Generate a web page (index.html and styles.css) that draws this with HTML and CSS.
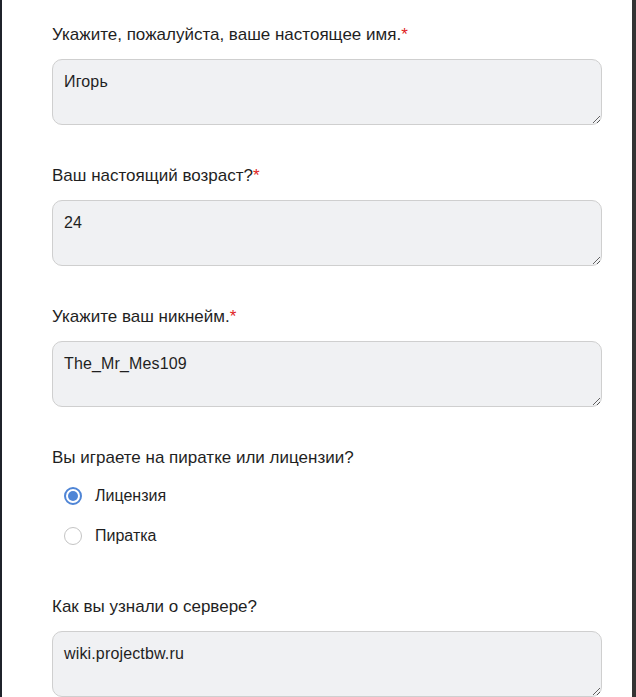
FILE: index.html
```html
<!DOCTYPE html>
<html lang="ru">
<head>
<meta charset="utf-8">
<title>Анкета</title>
<link rel="stylesheet" href="styles.css">
</head>
<body>
<div class="page">
  <div class="edge edge-left"></div>
  <form class="modal">
    <div class="field">
      <label class="label">Укажите, пожалуйста, ваше настоящее имя.<span class="req">*</span></label>
      <textarea class="input" readonly>Игорь</textarea>
    </div>
    <div class="field">
      <label class="label">Ваш настоящий возраст?<span class="req">*</span></label>
      <textarea class="input" readonly>24</textarea>
    </div>
    <div class="field">
      <label class="label">Укажите ваш никнейм.<span class="req">*</span></label>
      <textarea class="input" readonly>The_Mr_Mes109</textarea>
    </div>
    <div class="field field-radio">
      <div class="label">Вы играете на пиратке или лицензии?</div>
      <div class="radio-list">
        <div class="radio-row"><span class="radio checked"></span><span class="radio-text">Лицензия</span></div>
        <div class="radio-row"><span class="radio"></span><span class="radio-text">Пиратка</span></div>
      </div>
    </div>
    <div class="field">
      <label class="label">Как вы узнали о сервере?</label>
      <textarea class="input" readonly>wiki.projectbw.ru</textarea>
    </div>
  </form>
  <div class="edge edge-right"></div>
</div>
</body>
</html>
```
FILE: styles.css
```css
html, body {
  margin: 0;
  padding: 0;
  height: 697px;
  overflow: hidden;
  background: #303030;
}
.page {
  display: flex;
  height: 697px;
}
.edge {
  flex: 0 0 auto;
}
.edge-left {
  width: 2px;
  background: #1f232b;
}
.edge-right {
  width: 4px;
  background: #333333;
}
.modal {
  flex: 1;
  background: #ffffff;
  padding: 25px 28px 0 50px;
  font-family: "Liberation Sans", Arial, sans-serif;
  font-size: 16px;
  color: #1f1f1f;
  margin: 0;
}
.field {
  display: flex;
  flex-direction: column;
  margin-bottom: 41px;
}
.label {
  display: block;
  font-size: 17px;
  line-height: 20px;
  margin-bottom: 14px;
}
.req {
  color: #e02424;
}
.input {
  display: block;
  box-sizing: border-box;
  width: 550px;
  height: 66px;
  margin: 0;
  padding: 12px 11px;
  border: 1px solid #cfcfcf;
  border-radius: 10px;
  background: #f0f1f3;
  font-family: "Liberation Sans", Arial, sans-serif;
  font-size: 16px;
  letter-spacing: 0.15px;
  line-height: 20px;
  color: #1f1f1f;
  resize: vertical;
  outline: none;
}
.field-radio {
  margin-bottom: 41px;
}
.field-radio .label {
  margin-bottom: 8px;
}
.radio-list {
  display: flex;
  flex-direction: column;
}
.radio-row {
  display: flex;
  align-items: center;
  height: 40px;
  padding-left: 12px;
}
.radio {
  box-sizing: border-box;
  width: 18px;
  height: 18px;
  border-radius: 50%;
  border: 1.5px solid #c4c4c4;
  background: #ffffff;
  margin-right: 13px;
  position: relative;
}
.radio.checked {
  border: 2px solid #4f85d6;
}
.radio.checked::after {
  content: "";
  position: absolute;
  left: 2px;
  top: 2px;
  width: 10px;
  height: 10px;
  border-radius: 50%;
  background: #4f85d6;
}
.radio-text {
  line-height: 20px;
}
```
